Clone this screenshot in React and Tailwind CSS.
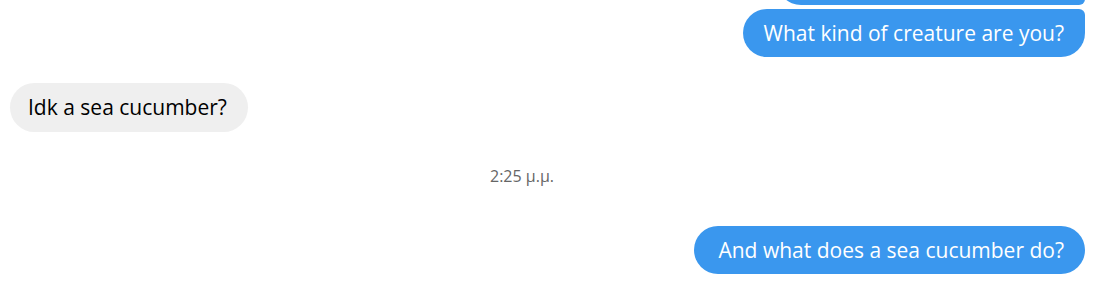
import React from 'react';

const font = { fontFamily: '"Open Sans", "Noto Sans", sans-serif' };

function Outgoing({ children, className = '' }) {
  return (
    <div className="flex justify-end pr-[13px]">
      <div
        className={`bg-[#3a97ee] text-white text-[21px] leading-[48px] h-[48px] px-[21px] whitespace-nowrap ${className}`}
      >
        {children}
      </div>
    </div>
  );
}

export default function App() {
  return (
    <div className="w-[1098px] h-[303px] bg-white overflow-hidden" style={font}>
      <div className="flex flex-col">
        {/* previous message, mostly scrolled out of view */}
        <div className="-mt-[43px]">
          <Outgoing className="rounded-l-[24px] rounded-tr-[24px] rounded-br-[6px] w-[308px]">&nbsp;</Outgoing>
        </div>
        <div className="mt-[4px]">
          <Outgoing className="rounded-l-[24px] rounded-br-[24px] rounded-tr-[6px]">
            What kind of creature are you?
          </Outgoing>
        </div>

        <div className="flex justify-start pl-[10px] mt-[26px]">
          <div className="bg-[#efefef] text-black text-[21px] leading-[49px] h-[49px] pl-[18px] pr-[21px] rounded-[25px] whitespace-nowrap">
            Idk a sea cucumber?
          </div>
        </div>

        <div className="flex justify-center mt-[34px] pr-[54px]">
          <span className="text-[16px] leading-[20px] text-[#666666]">2:25 μ.μ.</span>
        </div>

        <div className="mt-[40px]">
          <Outgoing className="rounded-[24px] pl-[24px]">And what does a sea cucumber do?</Outgoing>
        </div>
      </div>
    </div>
  );
}
